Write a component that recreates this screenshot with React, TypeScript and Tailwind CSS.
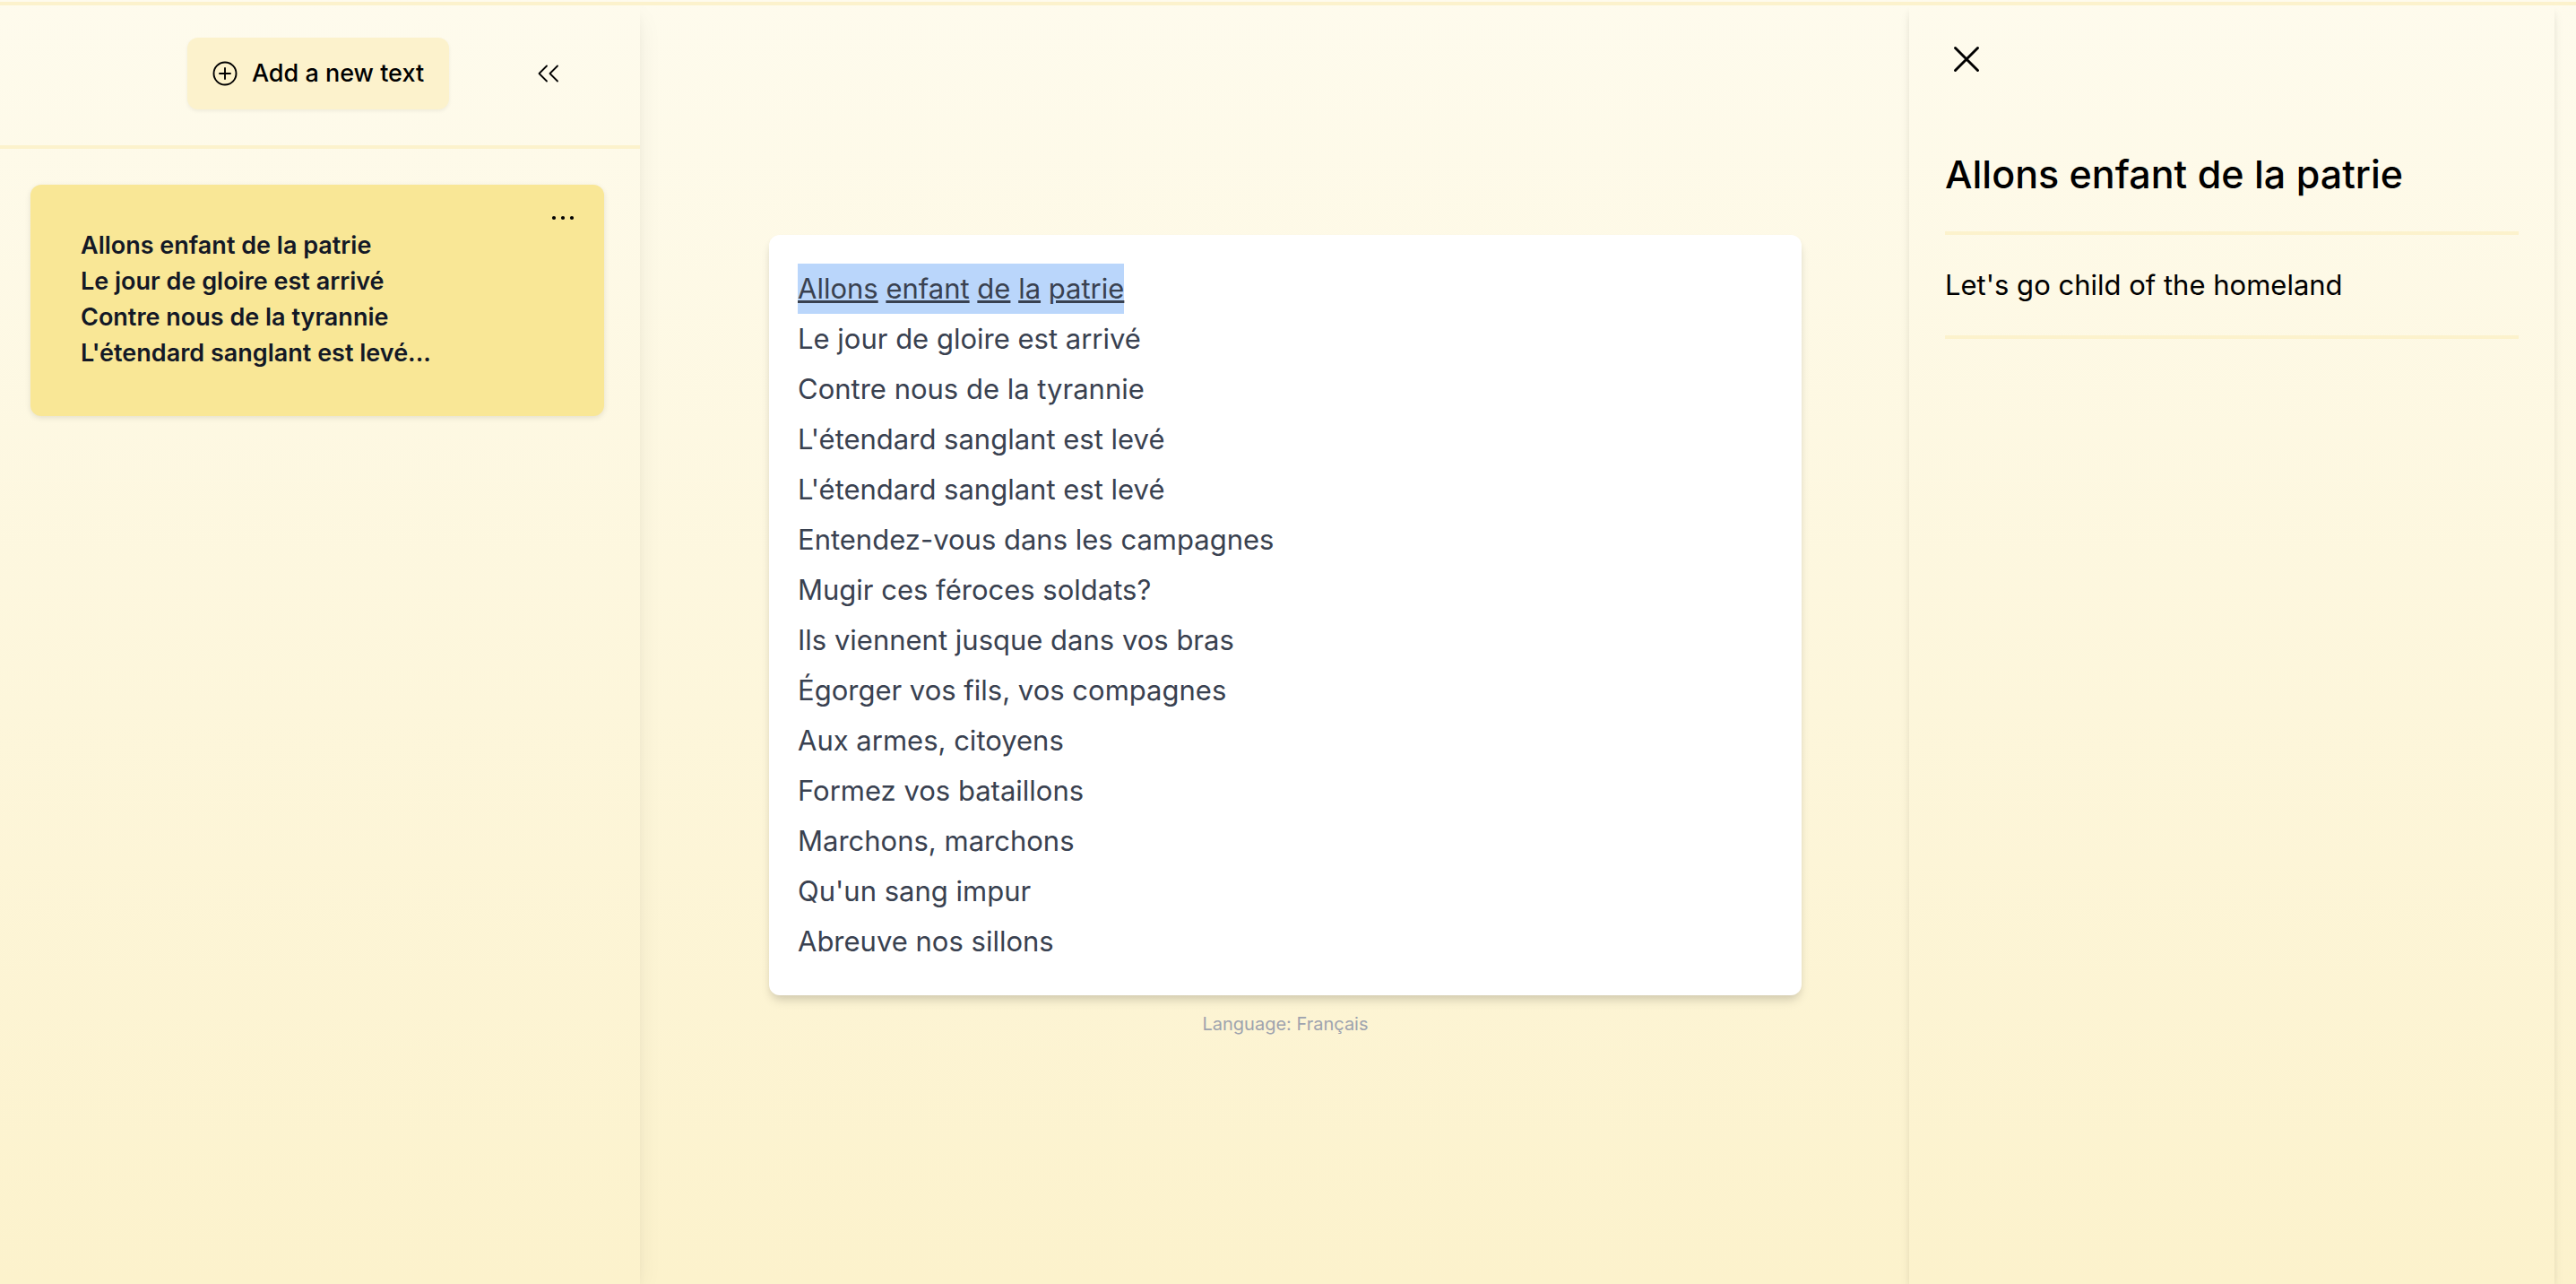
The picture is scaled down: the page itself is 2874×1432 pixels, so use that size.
import React from "react";

const verses = [
  "Le jour de gloire est arrivé",
  "Contre nous de la tyrannie",
  "L'étendard sanglant est levé",
  "L'étendard sanglant est levé",
  "Entendez-vous dans les campagnes",
  "Mugir ces féroces soldats?",
  "Ils viennent jusque dans vos bras",
  "Égorger vos fils, vos compagnes",
  "Aux armes, citoyens",
  "Formez vos bataillons",
  "Marchons, marchons",
  "Qu'un sang impur",
  "Abreuve nos sillons",
];

const preview = [
  "Allons enfant de la patrie",
  "Le jour de gloire est arrivé",
  "Contre nous de la tyrannie",
  "L'étendard sanglant est levé...",
];

const selected = ["Allons", "enfant", "de", "la", "patrie"];

function PlusCircleIcon() {
  return (
    <svg viewBox="0 0 28 28" className="size-7" fill="none" stroke="currentColor" strokeWidth="1.9" aria-hidden="true">
      <circle cx="14" cy="14" r="12.5" />
      <path d="M14 8v12M8 14h12" strokeLinecap="round" />
    </svg>
  );
}

function ChevronsLeftIcon() {
  return (
    <svg viewBox="0 0 24 20" className="h-5 w-6" fill="none" stroke="currentColor" strokeWidth="1.8" strokeLinecap="round" strokeLinejoin="round" aria-hidden="true">
      <path d="M10 1.5 1.5 10l8.5 8.5M22 1.5 13.5 10l8.5 8.5" />
    </svg>
  );
}

function DotsIcon() {
  return (
    <svg viewBox="0 0 28 28" className="size-7" fill="currentColor" aria-hidden="true">
      <circle cx="4" cy="14" r="2.1" />
      <circle cx="14" cy="14" r="2.1" />
      <circle cx="24" cy="14" r="2.1" />
    </svg>
  );
}

function CloseIcon() {
  return (
    <svg viewBox="0 0 48 48" className="size-12" fill="none" stroke="currentColor" strokeWidth="3" strokeLinecap="round" aria-hidden="true">
      <path d="M11.5 11.5l25 25M36.5 11.5l-25 25" />
    </svg>
  );
}

export default function App() {
  return (
    <div className="flex min-h-screen flex-col bg-linear-to-b from-[#fefbed] to-[#fcf2cc] pt-0.5 font-[Inter,sans-serif] text-black">
      <div className="flex flex-1 overflow-hidden border-t-4 border-[#fcf2cc]">
        <aside className="w-[714px] shrink-0 shadow-[0_10px_30px_-6px_rgb(0_0_0/0.09),0_8px_12px_-4px_rgb(0_0_0/0.05)]">
          <header className="relative flex justify-center border-b-4 border-[#fcf2cc] pt-9 pr-1 pb-10">
            <button type="button" className="flex h-20 items-center gap-4 rounded-xl bg-[#fcf2cc] px-7 text-[27px] font-medium shadow-[0_2px_4px_rgb(0_0_0/0.06)]">
              <PlusCircleIcon />
              Add a new text
            </button>
            <button type="button" aria-label="Collapse sidebar" className="absolute top-14 right-20 p-2.5">
              <ChevronsLeftIcon />
            </button>
          </header>
          <div className="pt-10 pr-10 pl-[34px]">
            <article className="relative rounded-xl bg-[#f9e796] px-14 pt-12 pb-[50px] text-[27px] leading-10 font-semibold text-[#131826] shadow-[0_2px_6px_rgb(0_0_0/0.1)]">
              {preview.map((line) => (
                <p key={line}>{line}</p>
              ))}
              <button type="button" aria-label="Text options" className="absolute top-[11px] right-8 py-3 text-black">
                <DotsIcon />
              </button>
            </article>
          </div>
        </aside>

        <main className="flex flex-1 flex-col items-center pt-64 pl-6">
          <div className="w-full max-w-[1152px] rounded-xl bg-white p-8 text-[31px] leading-[56px] text-[#394150] shadow-[0_8px_12px_-2px_rgb(0_0_0/0.12),0_4px_8px_-2px_rgb(0_0_0/0.08)]">
            <p>
              <span className="inline-block bg-[#bad6fb]">
                {selected.map((word, i) => (
                  <React.Fragment key={word}>
                    {i > 0 && " "}
                    <span className="underline">{word}</span>
                  </React.Fragment>
                ))}
              </span>
            </p>
            {verses.map((line, i) => (
              <p key={i}>{line}</p>
            ))}
          </div>
          <p className="mt-4 text-[20px] leading-8 text-[#9ea3ae]">Language: Français</p>
        </main>

        <aside className="mr-6 w-[720px] shrink-0 px-10 pt-9 shadow-[0_8px_12px_-2px_rgb(0_0_0/0.1),0_4px_8px_-2px_rgb(0_0_0/0.06)]">
          <button type="button" aria-label="Close" className="block">
            <CloseIcon />
          </button>
          <h2 className="mt-17 border-b-4 border-[#fcf2cc] pb-7 text-[43px] leading-[72px] font-medium">Allons enfant de la patrie</h2>
          <p className="border-b-4 border-[#fcf2cc] py-8 text-[31px] leading-12">Let's go child of the homeland</p>
        </aside>
      </div>
    </div>
  );
}
